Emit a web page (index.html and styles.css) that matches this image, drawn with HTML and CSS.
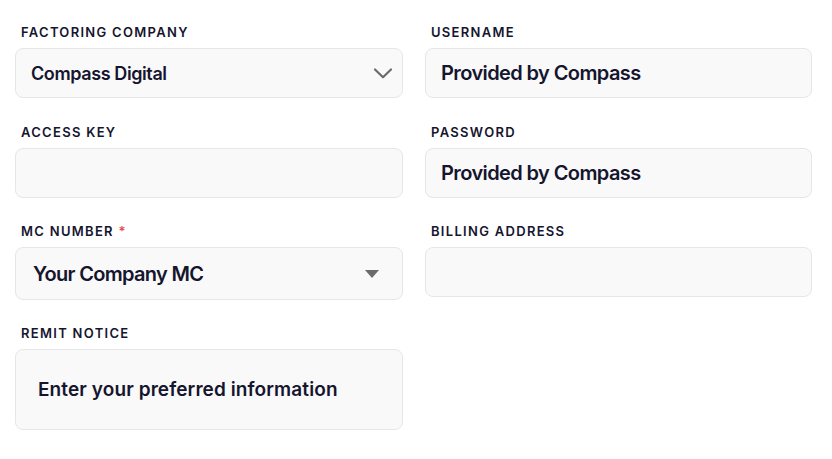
FILE: index.html
```html
<!DOCTYPE html>
<html lang="en">
<head>
<meta charset="utf-8">
<title>Factoring form</title>
<link rel="stylesheet" href="styles.css">
</head>
<body>
<form class="form">
  <div class="field">
    <label class="label">FACTORING COMPANY</label>
    <div class="box box-select">
      <span class="value v-digital">Compass Digital</span>
      <svg class="chevron" width="18" height="11" viewBox="0 0 18 11"><path d="M1 1.5 L9 9.2 L17 1.5" fill="none" stroke="#6b6b6e" stroke-width="2.2" stroke-linecap="round" stroke-linejoin="round"/></svg>
    </div>
  </div>
  <div class="field">
    <label class="label">USERNAME</label>
    <div class="box"><span class="value v-big">Provided by Compass</span></div>
  </div>
  <div class="field">
    <label class="label">ACCESS KEY</label>
    <div class="box"></div>
  </div>
  <div class="field">
    <label class="label">PASSWORD</label>
    <div class="box"><span class="value v-big">Provided by Compass</span></div>
  </div>
  <div class="field">
    <label class="label">MC NUMBER <span class="req">*</span></label>
    <div class="box box-select box-mc">
      <span class="value v-mc">Your Company MC</span>
      <span class="triangle"></span>
    </div>
  </div>
  <div class="field">
    <label class="label">BILLING ADDRESS</label>
    <div class="box"></div>
  </div>
  <div class="field">
    <label class="label">REMIT NOTICE</label>
    <div class="box box-remit"><span class="value v-remit">Enter your preferred information</span></div>
  </div>
</form>
</body>
</html>
```

FILE: styles.css
```css
html, body {
  margin: 0;
  padding: 0;
  background: #ffffff;
}

body {
  font-family: Inter, "Noto Sans", "Liberation Sans", sans-serif;
  color: #15152e;
}

.form {
  display: grid;
  grid-template-columns: 388px 387px;
  column-gap: 22px;
  row-gap: 25px;
  padding: 24px 0 0 15px;
  align-items: start;
}

.field {
  display: flex;
  flex-direction: column;
  gap: 8px;
}

.field:nth-child(-n+2) {
  margin-bottom: 1px;
}

.label {
  display: block;
  padding-left: 6px;
  font-size: 13px;
  line-height: 16px;
  font-weight: 600;
  letter-spacing: 1.3px;
  color: #15152e;
}

.req {
  color: #e5484d;
}

.box {
  box-sizing: border-box;
  height: 50px;
  border: 1px solid #e6e6ea;
  border-radius: 8px;
  background: #f9f9fa;
  display: flex;
  align-items: center;
  padding-left: 15px;
}

.box-select {
  justify-content: space-between;
  padding-right: 10px;
}

.box-mc {
  height: 53px;
  padding-left: 17px;
  padding-right: 23px;
}

.box-remit {
  height: 81px;
  padding-left: 22px;
}

.value {
  font-weight: 600;
  color: #15152e;
  white-space: nowrap;
}

.v-digital {
  font-size: 18px;
  letter-spacing: -0.4px;
}

.v-big {
  font-size: 20px;
  letter-spacing: -0.6px;
}

.v-mc {
  font-size: 20px;
  letter-spacing: -0.7px;
}

.v-remit {
  font-size: 19px;
  letter-spacing: 0.1px;
}

.chevron {
  display: block;
}

.triangle {
  width: 0;
  height: 0;
  border-left: 7px solid transparent;
  border-right: 7px solid transparent;
  border-top: 8px solid #6b6b6e;
}
```
